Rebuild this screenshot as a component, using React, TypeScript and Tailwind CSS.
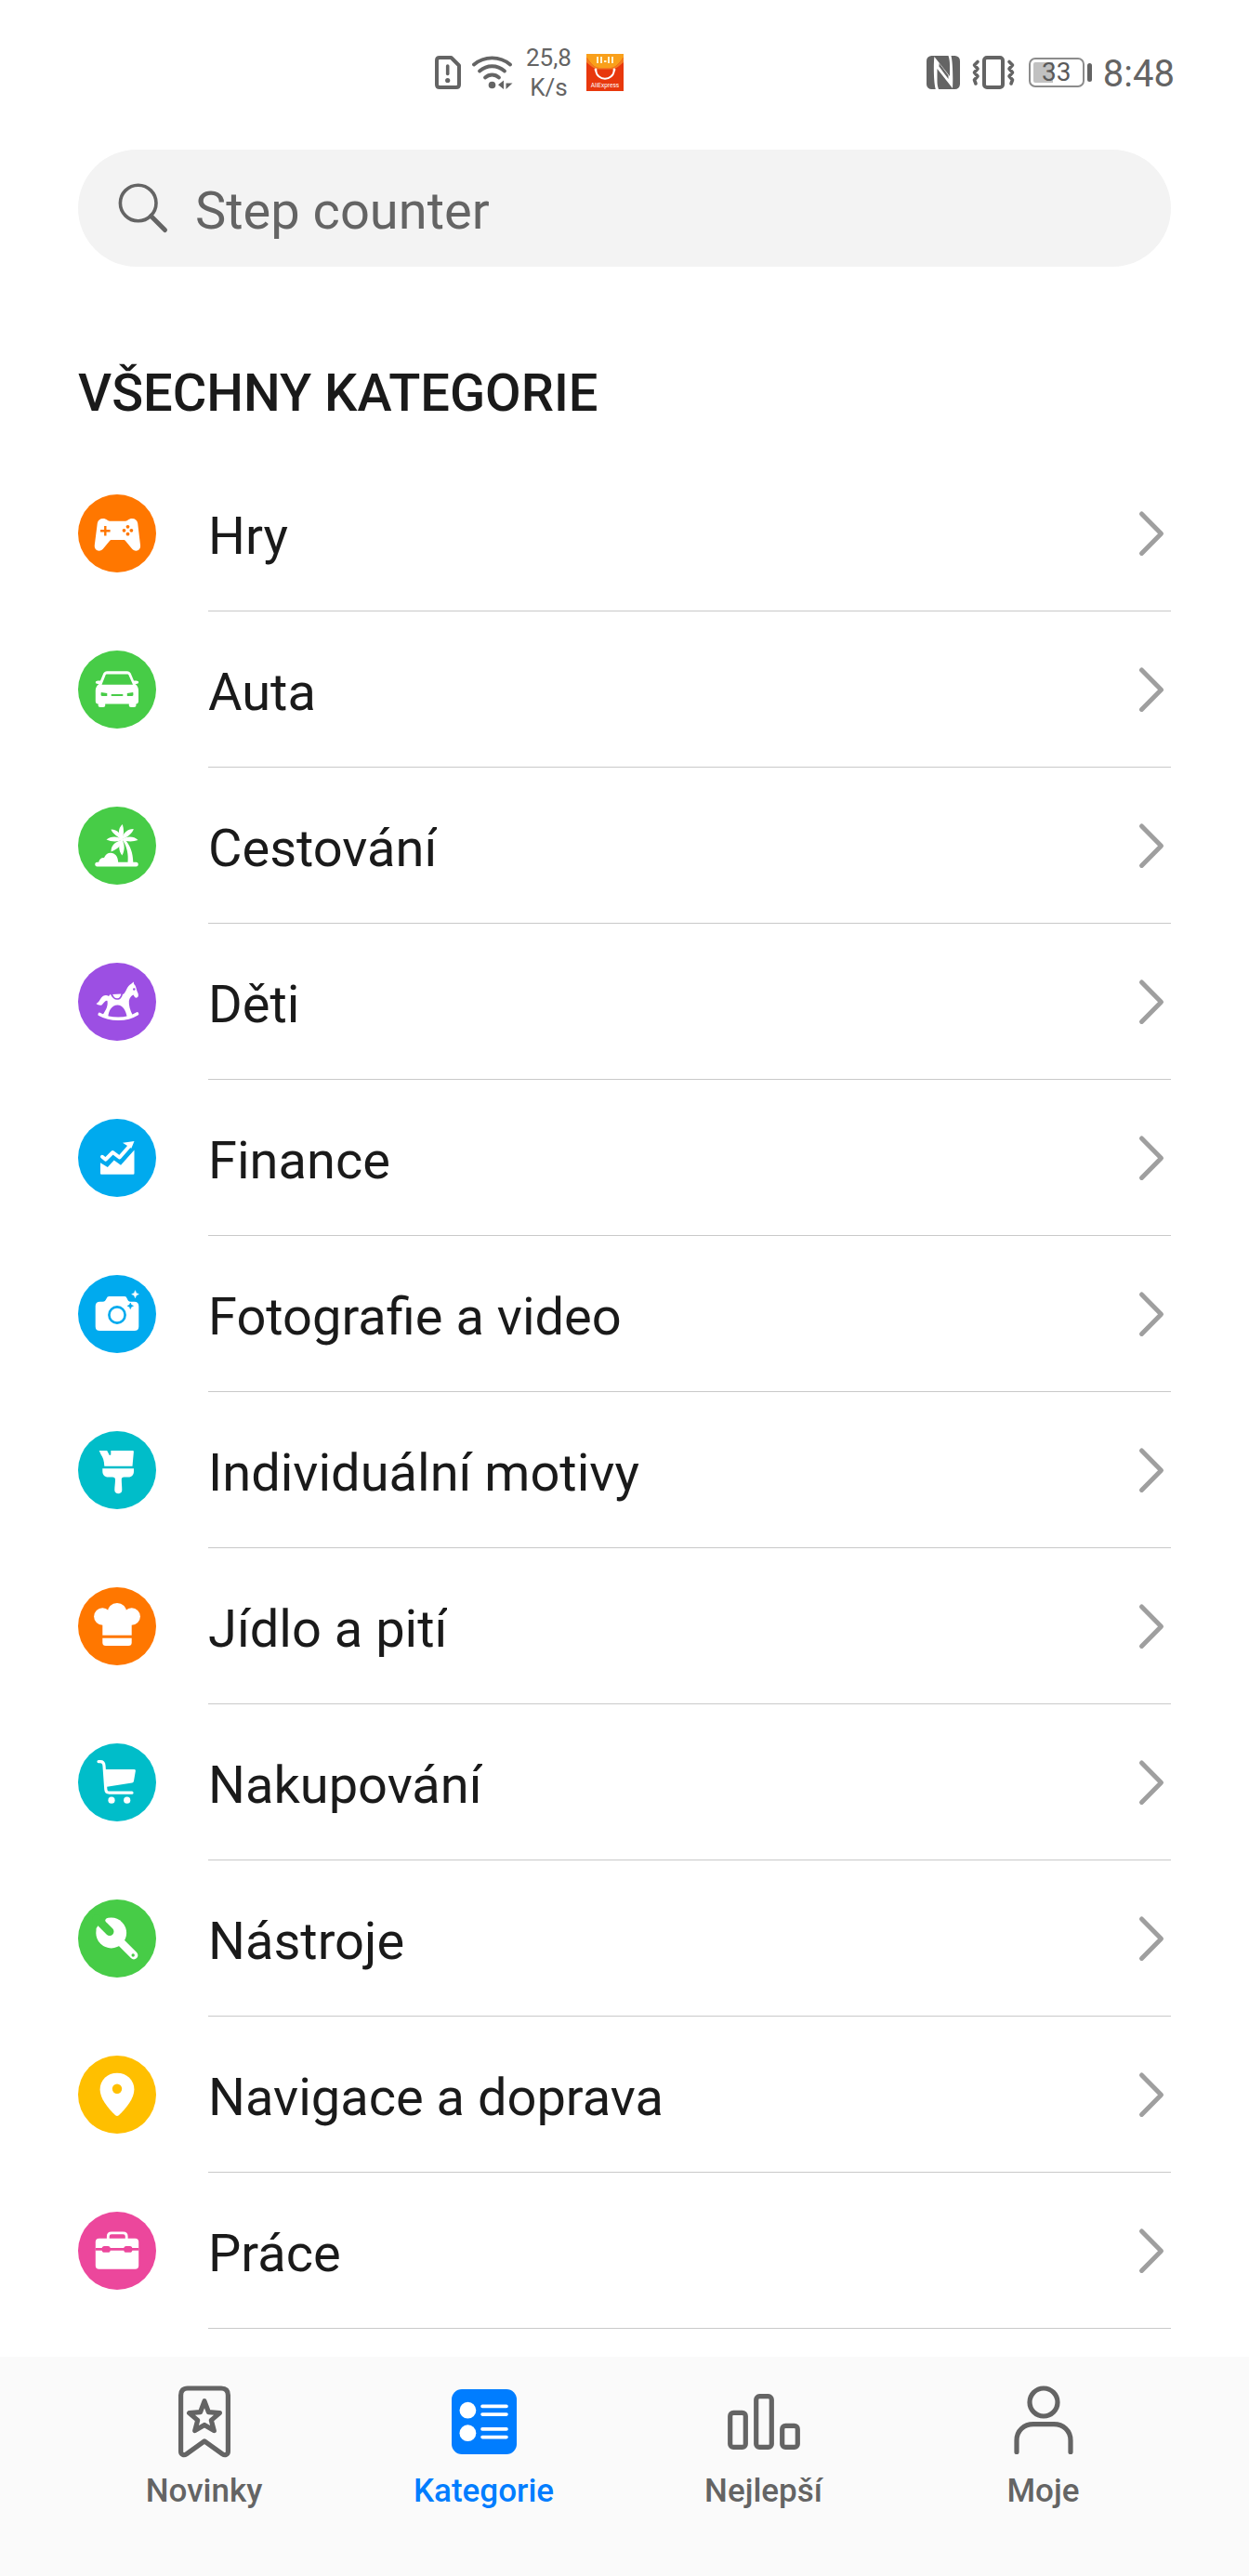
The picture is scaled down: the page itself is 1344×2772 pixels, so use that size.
import { useState } from "react";
import type { ReactNode } from "react";

type Category = {
  id: string;
  label: string;
  color: string;
  glyph: ReactNode;
};

const ORANGE = "#ff7700";
const GREEN = "#47cc47";
const PURPLE = "#9c4fe3";
const BLUE = "#00aaee";
const TEAL = "#00bdc9";
const YELLOW = "#ffbf00";
const PINK = "#ec479c";

const categories: Category[] = [
  {
    id: "hry",
    label: "Hry",
    color: ORANGE,
    glyph: (
      <>
        <path
          fill="#fff"
          d="M27 26C30.5 26 31.5 28.7 34 28.7H51C53.5 28.7 54.5 26 58 26C61.5 26 63.8 28 64.2 31L67 54.5C67.4 58.5 65.2 60.7 62.5 60.7C60.5 60.7 59 59.7 57.8 58.2L51.2 50.2C50.5 49.3 50 49 49 49H36C35 49 34.5 49.3 33.8 50.2L27.2 58.2C26 59.7 24.5 60.7 22.5 60.7C19.8 60.7 17.4 58.5 17.8 54.5L20.8 31C21.2 28 23.5 26 27 26Z"
        />
        <path d="M24 39.3H34.6M29.3 34V44.6" stroke={ORANGE} strokeWidth="2.4" />
        <g fill={ORANGE}>
          <circle cx="53.5" cy="34.8" r="1.9" />
          <circle cx="53.5" cy="42.7" r="1.9" />
          <circle cx="49.5" cy="38.8" r="1.9" />
          <circle cx="57.4" cy="38.8" r="1.9" />
        </g>
      </>
    ),
  },
  {
    id: "auta",
    label: "Auta",
    color: GREEN,
    glyph: (
      <>
        <path
          fill="#fff"
          fillRule="evenodd"
          d="M31.5 22.3H52.5C55 22.3 56.4 23.5 57.3 26L60 32.5H62.5C66 32.5 66 36 62.5 36H61.5C64 38 65 40 65 43V54.5C65 56.5 64 57.4 62.4 57.4V59.5C62.4 61.5 54.8 61.5 54.8 59.5V57.4H29.2V59.5C29.2 61.5 21.7 61.5 21.7 59.5V57.4C19.8 57.4 18.8 56.5 18.8 54.5V43C18.8 40 20 38 22.5 36H21.5C18 36 18 32.5 21.5 32.5H24L26.7 26C27.6 23.5 29 22.3 31.5 22.3ZM31.5 25.6C30.3 25.6 29.8 26 29.3 27.2L25.5 36.7H59L54.8 27.2C54.3 26 53.7 25.6 52.5 25.6Z"
        />
        <path fill={GREEN} d="M24.8 45L31.3 46V49H26C24.5 49 24.3 48 24.8 45ZM59.2 45L52.8 46V49H58C59.5 49 59.7 48 59.2 45Z" />
        <path d="M36.5 48H47.5" stroke={GREEN} strokeWidth="2" strokeLinecap="round" />
      </>
    ),
  },
  {
    id: "cestovani",
    label: "Cestování",
    color: GREEN,
    glyph: (
      <g fill="#fff">
        <path d="M20.5 59.7H22.2C22.8 56.5 25 54.8 28 55C29.5 51.5 32 49.7 35 49.7C40 49.7 43 54 43.2 59.7H53.5C54.3 52 53 43 47.5 35.5H50.5C56.5 42 59 50 59.3 59.7H62.5C65.5 59.7 65.5 64.4 62.5 64.4H20.5C17.5 64.4 17.5 59.7 20.5 59.7Z" />
        <path d="M47.5 35.5C42.5 30 43 23 47.8 19C49.5 24 49.5 30 47.5 35.5Z" />
        <path d="M47 35.5C48 28.5 53 24 59.8 24C58.5 28.5 54 32.5 47 35.5Z" />
        <path d="M47 35.5C52 31.5 60 31.5 64.5 36C59 38 52.5 38 47 35.5Z" />
        <path d="M48 35C42 31.5 35 31.5 30.5 35.5C36 38 43 38.5 48 35Z" />
        <path d="M48 36.5C40 30.5 36.5 28 35.5 24.5C42.5 25 47 29 48 36.5Z" />
        <path d="M48 35.5C39 38 35.5 42 35.5 48.5C42 46 47 42 48 35.5Z" />
        <path d="M47 34.5C43 41 43.5 47.5 47.3 52.5C50.5 47 50.5 41 47 34.5Z" />
      </g>
    ),
  },
  {
    id: "deti",
    label: "Děti",
    color: PURPLE,
    glyph: (
      <>
        <path d="M23.2 55.5C35 62 52 62 63.5 55" fill="none" stroke="#fff" strokeWidth="3.6" strokeLinecap="round" />
        <path
          fill="#fff"
          fillRule="evenodd"
          d="M19.5 44C23.5 42.5 23.5 38 27 35.8C29 34.5 31.5 34.8 33 36L34.8 33.8C37 38 39 39.8 42 39.8C45.5 39.8 47 37.5 48 34C51.5 33.5 52 25 57.5 22.5L59.7 20.6L60.2 23C62 24.5 62.5 27 63 29C63.5 31.5 65.2 33 64.8 35.5C64.5 37.5 62.5 38.5 61 37L59.5 34.5C57 35.5 55.5 38 54.8 41C54.5 46 56 51 58.5 56L52.8 58.8C51.5 51 48 45.5 42.5 45.5C36.5 45.5 33 51 32.3 58.5L26.5 56C30 51 32.5 46.5 31.5 41C29.5 40 27.5 43.5 25.5 45.5C23.5 46 21 45.5 19.5 44ZM59 28.5A1.3 1.3 0 1 0 61.6 28.5A1.3 1.3 0 1 0 59 28.5Z"
        />
        <path fill="#fff" d="M37.2 34L46.3 33.4C45.8 36.6 44.4 38.2 42 38.2C39.7 38.2 38.2 36.8 37.2 34Z" />
      </>
    ),
  },
  {
    id: "finance",
    label: "Finance",
    color: BLUE,
    glyph: (
      <g fill="#fff">
        <path d="M24 47.3L31.8 52L38.7 44.5L46 49.8L60.5 33.5V58.8Q60.5 59.8 59.5 59.8H25Q24 59.8 24 58.8Z" />
        <path d="M26 40.8L29.7 43.7L37.3 36L44.6 41.5L56 28.5" fill="none" stroke="#fff" strokeWidth="4" strokeLinejoin="round" strokeLinecap="round" />
        <path d="M48 25.8L60.5 24L57.3 31.8Z" />
      </g>
    ),
  },
  {
    id: "foto",
    label: "Fotografie a video",
    color: BLUE,
    glyph: (
      <>
        <path
          fill="#fff"
          d="M33.5 23H50C51.5 23 52 23.8 52.8 25.5C53.8 27.8 54.5 28.7 56.5 28.7H60.5Q65.3 28.7 65.3 33.5V55.5Q65.3 60 60.5 60H23.5Q18.7 60 18.7 55.5V33.5Q18.7 28.7 23.5 28.7H26.5C29 28.7 29.5 27.5 30.5 25.5C31.3 23.8 32 23 33.5 23Z"
        />
        <circle cx="42" cy="43" r="8.6" fill="none" stroke={BLUE} strokeWidth="2.6" />
        <path fill="#fff" d="M61.5 16.7Q61.9 20.2 65.3 20.7Q61.9 21.2 61.5 24.7Q61.1 21.2 57.7 20.7Q61.1 20.2 61.5 16.7Z" stroke="#fff" strokeWidth="0.6" />
        <path fill={BLUE} d="M56.3 30Q56.7 32.9 59.5 33.3Q56.7 33.7 56.3 36.6Q55.9 33.7 53.1 33.3Q55.9 32.9 56.3 30Z" stroke={BLUE} strokeWidth="0.6" />
      </>
    ),
  },
  {
    id: "motivy",
    label: "Individuální motivy",
    color: TEAL,
    glyph: (
      <g fill="#fff">
        <path d="M22.7 21H31.2L33.8 26L35.3 25.5V21H58.8Q60 21 59.9 22.2L58.5 37.7H28.3C28 32 27 28.5 24.5 25Z" />
        <path d="M26.3 40.2H60V43C60 47 58 49.5 54 49.5H49.5C47.5 49.5 46.8 50.5 46.8 52C46.8 56 47.3 60 47.3 63.5C47.3 68.5 39.3 68.5 39.3 63.5C39.3 60 40 56 40 52C40 50.5 39 49.5 37 49.5H32.5C28.5 49.5 26.3 47 26.3 43Z" />
      </g>
    ),
  },
  {
    id: "jidlo",
    label: "Jídlo a pití",
    color: ORANGE,
    glyph: (
      <g fill="#fff">
        <circle cx="26.3" cy="31.5" r="9.2" />
        <circle cx="57.7" cy="31.5" r="9.2" />
        <circle cx="42" cy="27.5" r="10.5" />
        <path d="M26.3 30H57.7V51.7H26.3Z" />
        <path d="M26.3 54.7H57.7V59.5Q57.7 63 54.2 63H29.8Q26.3 63 26.3 59.5Z" />
      </g>
    ),
  },
  {
    id: "nakupovani",
    label: "Nakupování",
    color: TEAL,
    glyph: (
      <g fill="#fff">
        <path d="M22 19.6H24C26.5 19.6 27.8 21 28 24L29.8 49.5C30 52 31 53.2 33.5 53.2H58" fill="none" stroke="#fff" strokeWidth="3.2" strokeLinecap="round" />
        <path d="M28 27.9H60.5Q62.2 27.9 61.9 29.6L60 40.5Q59.7 42.3 58 42.5L31 46.7Z" />
        <circle cx="36" cy="61.2" r="3.6" />
        <circle cx="52.7" cy="61.2" r="3.6" />
      </g>
    ),
  },
  {
    id: "nastroje",
    label: "Nástroje",
    color: GREEN,
    glyph: (
      <>
        <path d="M46 46L60 60" stroke="#fff" strokeWidth="8.8" strokeLinecap="round" />
        <circle cx="35.7" cy="36" r="16.4" fill="#fff" />
        <path d="M20 20.5L34 34.5" stroke={GREEN} strokeWidth="9" strokeLinecap="round" />
        <path d="M29.6 24.5L22 22L31 18Z" fill={GREEN} />
        <circle cx="31.3" cy="22.5" r="2" fill="#fff" />
        <circle cx="21.5" cy="31.7" r="2" fill="#fff" />
        <circle cx="59.2" cy="60" r="1.7" fill={GREEN} />
      </>
    ),
  },
  {
    id: "navigace",
    label: "Navigace a doprava",
    color: YELLOW,
    glyph: (
      <>
        <path
          fill="#fff"
          d="M42 18.8C52.5 18.8 60.4 26.5 60.4 36.5C60.4 46 52 56.5 43.8 64.3Q42 65.9 40.2 64.3C32 56.5 23.6 46 23.6 36.5C23.6 26.5 31.5 18.8 42 18.8Z"
        />
        <circle cx="42" cy="35.7" r="5.2" fill={YELLOW} />
      </>
    ),
  },
  {
    id: "prace",
    label: "Práce",
    color: PINK,
    glyph: (
      <>
        <path d="M32.3 30V26.5Q32.3 22.8 36 22.8H48.5Q52.2 22.8 52.2 26.5V30" fill="none" stroke="#fff" strokeWidth="2.8" />
        <rect x="18.8" y="28.7" width="46.4" height="33" rx="3.8" fill="#fff" />
        <path d="M18.8 40.4H65.2" stroke={PINK} strokeWidth="2.6" />
        <rect x="25.7" y="37" width="9" height="6.8" rx="2.6" fill={PINK} />
        <rect x="49.3" y="37" width="9" height="6.8" rx="2.6" fill={PINK} />
      </>
    ),
  },
];

const tabs = [
  {
    id: "novinky",
    label: "Novinky",
    icon: (
      <g fill="none" stroke="currentColor" strokeWidth="5.2" strokeLinejoin="round">
        <path d="M24 6H60Q67.4 6 67.4 13.5V74C67.4 77.5 64 78.5 61.5 76.8L42 62.8L22.5 76.8C20 78.5 16.6 77.5 16.6 74V13.5Q16.6 6 24 6Z" />
        <path d="M42 19.8L46.4 31.6L58.4 32.6L49.3 40.4L52.3 51.6L42 45.5L31.7 51.6L34.7 40.4L25.6 32.6L37.6 31.6Z" />
      </g>
    ),
  },
  {
    id: "kategorie",
    label: "Kategorie",
    icon: (
      <>
        <rect x="7" y="7" width="70" height="70" rx="11" fill="currentColor" />
        <circle cx="24.4" cy="29.7" r="8.9" fill="#fff" />
        <circle cx="24.4" cy="54.2" r="8.9" fill="#fff" />
        <path d="M40 25.4H66M40 34.1H66M40 49.9H66M40 58.6H66" stroke="#fff" strokeWidth="3.6" strokeLinecap="round" />
      </>
    ),
  },
  {
    id: "nejlepsi",
    label: "Nejlepší",
    icon: (
      <g fill="none" stroke="currentColor" strokeWidth="5.2">
        <rect x="5.7" y="32.4" width="16.6" height="37" rx="3.5" />
        <rect x="33.7" y="14.7" width="16.6" height="54.7" rx="3.5" />
        <rect x="61.7" y="46.4" width="16.6" height="23" rx="3.5" />
      </g>
    ),
  },
  {
    id: "moje",
    label: "Moje",
    icon: (
      <g fill="none" stroke="currentColor" strokeWidth="5.2" strokeLinecap="round">
        <circle cx="42" cy="21" r="15" />
        <path d="M13 74.4V62C13 51.5 21 44.6 31 44.6H53C63 44.6 71 51.5 71 62V74.4" />
      </g>
    ),
  },
];

function StatusBar() {
  return (
    <header className="flex h-[156px] items-center justify-between pr-20 pl-[468px] text-[#646464]">
      <div className="flex items-center">
        <svg className="h-9 w-7" viewBox="0 0 28 36" fill="none" stroke="currentColor">
          <path d="M5 2H17.5L26 10.5V31Q26 34 23 34H5Q2 34 2 31V5Q2 2 5 2Z" strokeWidth="4" strokeLinejoin="round" />
          <path d="M13.7 11V19.5" strokeWidth="3.6" strokeLinecap="round" />
          <circle cx="13.7" cy="26.5" r="2.6" fill="currentColor" stroke="none" />
        </svg>
        <svg className="ml-3 h-9 w-11" viewBox="0 0 44 36" fill="none" stroke="currentColor" strokeLinecap="round">
          <path d="M2 9.5C13 0 30 0 41 9.5" strokeWidth="3.8" />
          <path d="M8 16.5C16 9.5 27 9.5 35 16.5" strokeWidth="3.8" />
          <path d="M14 23.5C18.5 19.5 24.5 19.5 29 23.5" strokeWidth="3.8" />
          <circle cx="21.5" cy="31.5" r="3.8" fill="currentColor" stroke="none" />
          <path d="M34 26.5V36L28 31.2ZM36.5 29.5H43.5L36.5 36Z" fill="currentColor" stroke="none" />
        </svg>
        <p className="ml-3.5 text-center text-[26px] leading-8">
          25,8
          <br />
          K/s
        </p>
        <svg className="ml-4 size-10" viewBox="0 0 40 40">
          <rect width="40" height="40" fill="#e8380d" />
          <path d="M0 0H40V4C36 8 33 15 26 15H14C7 15 4 8 0 4Z" fill="#f9a01b" />
          <path d="M0 4C4 8 7 15 14 15H26C33 15 36 8 40 4V9C37 11 33 16.5 26 16.5H14C7 16.5 3 11 0 9Z" fill="#f47b20" />
          <path d="M12 3V10M16 3V10M24 3V10M28 3V10M19 8H21.5" stroke="#fff3d0" strokeWidth="2" />
          <path d="M10 17C11 30 29 30 30 17" fill="none" stroke="#fff" strokeWidth="2" strokeLinecap="round" />
          <circle cx="10" cy="17" r="1.4" fill="#fff" />
          <circle cx="30" cy="17" r="1.4" fill="#fff" />
          <text x="20" y="35.5" textAnchor="middle" fontSize="6.5" fill="#fff">
            AliExpress
          </text>
        </svg>
      </div>

      <div className="flex items-center">
        <svg className="size-9" viewBox="0 0 36 36">
          <rect width="36" height="36" rx="5.5" fill="currentColor" />
          <path
            d="M9.8 36C7.5 28 7.5 8 8.4 1L25 22V10C25 6 24.5 3 23.5 0H26.5C28.5 8 28.5 28 28 35L11.5 14V27C11.5 31 12 33 13 36Z"
            fill="#fff"
          />
          <path d="M10.5 0H22C23.5 4 23.7 8 23.7 12V17.5ZM12.8 17.5L25.5 36H14C12.8 32 12.8 28 12.8 23Z" fill="currentColor" />
          <path d="M13.5 11.5L23.5 25V21L13.5 8Z" fill="currentColor" />
        </svg>
        <svg className="ml-3 h-9 w-12" viewBox="0 0 48 36" fill="none" stroke="currentColor">
          <rect x="14" y="2" width="20" height="32" rx="3" strokeWidth="4" />
          <path d="M7 6.5L3.5 10L7 14L3.5 18L7 22L3.5 26L5 30M41 6.5L44.5 10L41 14L44.5 18L41 22L44.5 26L43 30" strokeWidth="3.6" strokeLinecap="round" strokeLinejoin="round" />
        </svg>
        <div className="ml-3.5 flex items-center gap-[3px]">
          <div className="relative h-8 w-15 rounded-[7px] border-2 border-[#8c8c8c] p-[3px]">
            <div className="h-full w-[21px] rounded-l-xs bg-[#c1c1c1]" />
            <span className="absolute inset-0 flex items-center justify-center text-[28px] leading-none text-[#5a5a5a]">
              33
            </span>
          </div>
          <div className="h-5 w-[5px] rounded-full bg-[#646464]" />
        </div>
        <p className="ml-3 pt-1 text-[40px] leading-none">8:48</p>
      </div>
    </header>
  );
}

function SearchBox() {
  return (
    <div className="mt-[5px] flex h-[126px] items-center rounded-full bg-[#f3f3f3] pr-12 pl-[42px]">
      <svg className="size-14 shrink-0" viewBox="0 0 56 56" fill="none" stroke="#646464" strokeLinecap="round">
        <circle cx="22.7" cy="22.5" r="19.3" strokeWidth="3.6" />
        <path d="M36.5 36.5L51.5 51.5" strokeWidth="5" />
      </svg>
      <input
        type="text"
        aria-label="Step counter"
        placeholder="Step counter"
        className="ml-7 min-w-0 flex-1 bg-transparent pt-1.5 text-[56px] leading-[66px] text-[#1a1a1a] outline-none placeholder:text-[#646464]"
      />
    </div>
  );
}

function CategoryRow({ category }: { category: Category }) {
  return (
    <li>
      <a href={`#${category.id}`} className="flex h-[168px] items-center gap-14">
        <svg className="size-21 shrink-0" viewBox="0 0 84 84">
          <circle cx="42" cy="42" r="42" fill={category.color} />
          {category.glyph}
        </svg>
        <span className="flex h-full min-w-0 flex-1 items-center justify-between border-b border-[#c9c9c9]">
          <span className="truncate pt-1.5 text-[56px] leading-[66px]">{category.label}</span>
          <svg className="size-[42px] shrink-0" viewBox="0 0 42 42" overflow="visible">
            <path d="M10.5 0L31.5 21.2L10.5 42.4" fill="none" stroke="#9f9f9f" strokeWidth="5" strokeLinecap="round" strokeLinejoin="round" />
          </svg>
        </span>
      </a>
    </li>
  );
}

export default function App() {
  const [activeTab, setActiveTab] = useState("kategorie");

  return (
    <div className="flex min-h-screen flex-col bg-white font-[Roboto,sans-serif] text-[#1a1a1a]">
      <StatusBar />

      <main className="flex-1 px-21 pb-[30px]">
        <SearchBox />
        <h1 className="mt-[103px] text-[56px] leading-[66px] font-medium">VŠECHNY KATEGORIE</h1>
        <ul className="mt-[34px]">
          {categories.map((category) => (
            <CategoryRow key={category.id} category={category} />
          ))}
        </ul>
      </main>

      <nav className="sticky bottom-0 grid grid-cols-4 bg-[#fafafa] pt-7 pr-[71px] pb-[70px] pl-[69px]">
        {tabs.map((tab) => (
          <button
            key={tab.id}
            type="button"
            onClick={() => setActiveTab(tab.id)}
            className={`flex flex-col items-center gap-3 ${
              activeTab === tab.id ? "text-[#007dff]" : "text-[#646464]"
            }`}
          >
            <svg className="size-21" viewBox="0 0 84 84">
              {tab.icon}
            </svg>
            <span className="text-[35px] leading-[42px] font-medium">{tab.label}</span>
          </button>
        ))}
      </nav>
    </div>
  );
}
